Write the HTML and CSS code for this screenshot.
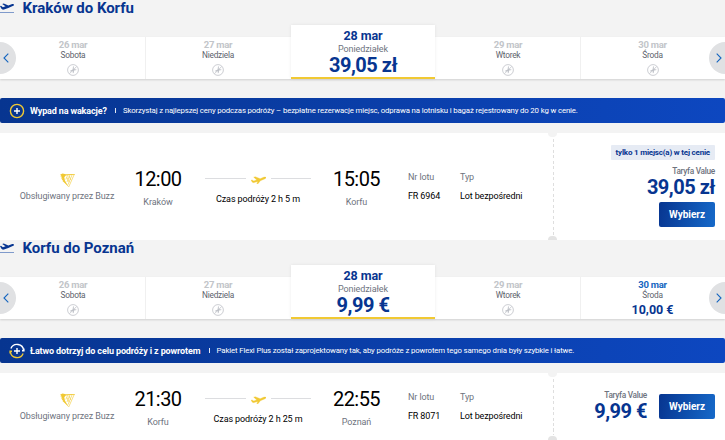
FILE: index.html
```html
<!DOCTYPE html>
<html lang="pl">
<head>
<meta charset="utf-8">
<title>Wybór lotów</title>
<link rel="stylesheet" href="styles.css">
</head>
<body>
<svg class="defs" aria-hidden="true">
  <symbol id="takeoff" viewBox="0 0 14 12"><path d="M0 4.300l1-.5 1.900 1.400 2.600-.9L2.200 2l1.600-.5L8.300 3.400l3.300-1.200c.9-.4 2.200-.3 2.400.4s-.6 1.200-1.300 1.500L8.300 6 4 7.600c-1.300.4-2.200-.1-2.700-1z"/><path class="ground" d="M0 10h14v1H0z"/></symbol>
  <symbol id="plane" viewBox="0 0 15 8"><path d="M0 4.300l1-.4 1.800 1 3-1L2.700 1.200 4.200.7l5 2 3.300-1.400c1-.4 2.300-.4 2.500.2s-.7 1.200-1.500 1.500L9.400 4.700 7.200 7.600l-1.400.3.900-2.500-3.500 1.200c-1 .3-1.600 0-2-.6z" stroke="#f1c933" stroke-width=".3"/></symbol>
  <symbol id="noflight" viewBox="0 0 12 12"><g fill="none" stroke="#bfc2c8" stroke-width=".8"><circle cx="6" cy="6" r="5.400"/><path d="M2.500 9.700L9.700 2.500"/></g><path fill="#bfc2c8" d="M2.700 7L5.600 5.400 6 2.600l.8-.4v2.800l2.400.4.500.700-2.600.4-.4 2.300-.8.700-.3-2.500-2.200.6z"/></symbol>
  <symbol id="harp" viewBox="0 0 15 15"><path fill="#f1c933" d="M0 1.800L2.500.5 6 1.300 15 .9l-.4.9-8.800.8-1.500 1.700.6 3.100 4 6.800-5-5L2.200 7.800l1.100.1L1 5.300l1.500.3L.3 3.300l1.800.3z"/><path fill="none" stroke="#f1c933" stroke-width=".6" d="M14.200 1.500L8.700 14M12 2L7.900 11.800M9.800 2.200L7 9M7.600 2.400L5.800 6.500M6.800 4.300l2.500 5M9 3l1.800 4"/></symbol>
</svg>

<section class="journey">
  <h2 class="title"><svg><use href="#takeoff"/></svg>Kraków do Korfu</h2>
  <div class="days">
    <div class="day off"><b>26 mar</b><span>Sobota</span><svg><use href="#noflight"/></svg></div>
    <div class="day off"><b>27 mar</b><span>Niedziela</span><svg><use href="#noflight"/></svg></div>
    <div class="day selected"><b>28 mar</b><span>Poniedziałek</span><strong>39,05 zł</strong></div>
    <div class="day off"><b>29 mar</b><span>Wtorek</span><svg><use href="#noflight"/></svg></div>
    <div class="day off"><b>30 mar</b><span>Środa</span><svg><use href="#noflight"/></svg></div>
    <button class="arrow prev" aria-label="Wstecz"><svg viewBox="0 0 6 10"><path d="M5.300.7L1 5l4.300 4.300"/></svg></button>
    <button class="arrow next" aria-label="Dalej"><svg viewBox="0 0 6 10"><path d="M.7.7L5 5 .7 9.300"/></svg></button>
  </div>
  <div class="banner">
    <svg viewBox="0 0 16 16"><circle cx="8" cy="8" r="6.600" stroke="#f1c933"/><path d="M8 5v6M5 8h6" stroke="#fff"/></svg>
    <b class="lead-a">Wypad na wakacje?</b><i></i><span>Skorzystaj z najlepszej ceny podczas podróży – bezpłatne rezerwacje miejsc, odprawa na lotnisku i bagaż rejestrowany do 20 kg w cenie.</span>
  </div>
  <article class="card tall">
    <div class="flight">
      <div class="carrier"><svg><use href="#harp"/></svg><span>Obsługiwany przez Buzz</span></div>
      <div class="stop"><time>12:00</time><span>Kraków</span></div>
      <div class="duration"><div class="track"><svg><use href="#plane"/></svg></div><span>Czas podróży 2 h 5 m</span></div>
      <div class="stop"><time>15:05</time><span>Korfu</span></div>
      <div class="info number"><span>Nr lotu</span><em>FR 6964</em></div>
      <div class="info"><span>Typ</span><em>Lot bezpośredni</em></div>
    </div>
    <div class="fare">
      <div class="badge">tylko 1 miejsc(a) w tej cenie</div>
      <div class="price"><span>Taryfa Value</span><strong>39,05 zł</strong></div>
      <button class="select">Wybierz</button>
    </div>
  </article>
</section>

<section class="journey">
  <h2 class="title"><svg><use href="#takeoff"/></svg>Korfu do Poznań</h2>
  <div class="days">
    <div class="day off"><b>26 mar</b><span>Sobota</span><svg><use href="#noflight"/></svg></div>
    <div class="day off"><b>27 mar</b><span>Niedziela</span><svg><use href="#noflight"/></svg></div>
    <div class="day selected"><b>28 mar</b><span>Poniedziałek</span><strong>9,99 €</strong></div>
    <div class="day off"><b>29 mar</b><span>Wtorek</span><svg><use href="#noflight"/></svg></div>
    <div class="day"><b>30 mar</b><span>Środa</span><strong>10,00 €</strong></div>
    <button class="arrow prev" aria-label="Wstecz"><svg viewBox="0 0 6 10"><path d="M5.300.7L1 5l4.300 4.300"/></svg></button>
    <button class="arrow next" aria-label="Dalej"><svg viewBox="0 0 6 10"><path d="M.7.7L5 5 .7 9.300"/></svg></button>
  </div>
  <div class="banner">
    <svg viewBox="0 0 16 16"><path d="M1.900 5.500A6.600 6.600 0 0 1 14.600 7.500M14.900 5.500v2.200H13" stroke="#fff"/><path d="M14.100 10.500A6.600 6.600 0 0 1 1.400 8.500M1.100 10.500V8.300H3" stroke="#f1c933"/><path d="M8 5v6M5 8h6" stroke="#fff"/></svg>
    <b>Łatwo dotrzyj do celu podróży i z powrotem</b><i></i><span>Pakiet Flexi Plus został zaprojektowany tak, aby podróże z powrotem tego samego dnia były szybkie i łatwe.</span>
  </div>
  <article class="card short">
    <div class="flight">
      <div class="carrier"><svg><use href="#harp"/></svg><span>Obsługiwany przez Buzz</span></div>
      <div class="stop"><time>21:30</time><span>Korfu</span></div>
      <div class="duration"><div class="track"><svg><use href="#plane"/></svg></div><span>Czas podróży 2 h 25 m</span></div>
      <div class="stop"><time>22:55</time><span>Poznań</span></div>
      <div class="info number"><span>Nr lotu</span><em>FR 8071</em></div>
      <div class="info"><span>Typ</span><em>Lot bezpośredni</em></div>
    </div>
    <div class="fare inline">
      <div class="price"><span>Taryfa Value</span><strong>9,99 €</strong></div>
      <button class="select">Wybierz</button>
    </div>
  </article>
</section>
</body>
</html>
```
FILE: styles.css
```css
* { box-sizing: border-box; }
body {
  margin: 0;
  height: 440px;
  overflow: hidden;
  background: #f3f3f3;
  font-family: Roboto, "Liberation Sans", sans-serif;
  color: #6e737e;
  white-space: nowrap;
}
.defs { display: none; }
svg { display: block; flex: none; }
button { border: 0; padding: 0; font-family: inherit; }

.title {
  display: flex;
  align-items: center;
  gap: 8.500px;
  height: 16px;
  margin: 0 0 21px;
  font-size: 15px;
  line-height: 16px;
  font-weight: 700;
  letter-spacing: -.03px;
  color: #073590;
}
.title svg { width: 14px; height: 12px; fill: #073590; }
.ground { fill: #7f9acb; }

.days {
  position: relative;
  display: grid;
  grid-template-columns: 146px 145px 144px 146px 144px;
  height: 42px;
  margin-bottom: 19px;
  background: #fff;
  box-shadow: 0 1px 2px rgba(0, 0, 0, .15);
}
.day {
  display: flex;
  flex-direction: column;
  align-items: center;
  padding-top: 2px;
  padding-left: 1px;
  border-right: 1px solid #f0f0f0;
}
.day:nth-child(2), .day:nth-child(5) { border-right: 0; padding: 2px 1px 0 0; }
.day b { font-size: 9.500px; line-height: 12px; letter-spacing: -.25px; color: #1465c0; }
.day span { font-size: 8.300px; line-height: 8px; letter-spacing: -.25px; color: #5d626c; }
.day svg { width: 12px; height: 12px; margin-top: 5px; }
.day strong { font-size: 12.500px; line-height: 14px; margin-top: 4px; color: #073590; }
.day.off b { color: #c2c5c9; }
.day.selected {
  height: 54px;
  margin-top: -12px;
  padding: 4px 0 0;
  background: #fff;
  border: 0;
  border-bottom: 2px solid #f1c933;
  box-shadow: 0 0 3px rgba(0, 0, 0, .08);
}
.day.selected b { font-size: 12.500px; line-height: 14px; letter-spacing: -.1px; color: #073590; }
.day.selected span { font-size: 9px; line-height: 12px; letter-spacing: -.1px; color: #6e737e; }
.day.selected strong { font-size: 20px; line-height: 20px; margin-top: 0; letter-spacing: -.5px; }

.arrow {
  position: absolute;
  top: 5px;
  width: 16px;
  height: 32px;
  display: flex;
  align-items: center;
  background: #e0e1e3;
}
.arrow svg { width: 6px; height: 10px; fill: none; stroke: #1465c0; stroke-width: 1.100; }
.prev { left: 0; border-radius: 0 16px 16px 0; padding-left: 3px; }
.next { right: 0; border-radius: 16px 0 0 16px; padding-left: 7px; }

.banner {
  display: flex;
  align-items: center;
  height: 25px;
  margin-bottom: 10px;
  padding-left: 9px;
  border-radius: 2px;
  background: linear-gradient(90deg, #073590, #0d47c0);
  color: #fff;
}
.banner svg { width: 16px; height: 16px; fill: none; stroke-width: 1.400; }
.banner b { margin-left: 5px; font-size: 9px; letter-spacing: -.12px; }
.banner .lead-a { letter-spacing: -.14px; }
.banner i { width: 1px; height: 5px; margin: 0 7px 0 8.200px; background: #e6ebf4; }
.banner span { font-size: 7.800px; letter-spacing: -.138px; }

.card {
  position: relative;
  display: grid;
  grid-template-columns: 554px 171px;
  background: #fff;
}
.tall { height: 107px; }
.short { height: 67px; }
.card::before, .card::after {
  content: "";
  position: absolute;
  left: 548px;
  width: 9px;
  height: 4px;
  background: #f3f3f3;
}
.card::before { top: 0; border-radius: 0 0 5px 5px; }
.card::after { bottom: 0; border-radius: 5px 5px 0 0; background: #e4e4e4; }

.flight {
  display: grid;
  grid-template-columns: 134px 48px 152px 45px 81px 94px;
  align-items: center;
  background: repeating-linear-gradient(180deg, #dedede 0 3px, transparent 3px 5.500px) 100% 6px / 1px calc(100% - 11px) no-repeat;
}
.flight > div { height: 50px; display: flex; flex-direction: column; align-items: center; }
.carrier svg { width: 15px; height: 15px; margin-top: 11px; }
.carrier span { font-size: 9px; line-height: 12px; margin-top: 2px; letter-spacing: -.12px; }
.stop time { font-size: 20px; line-height: 22px; margin-top: 6px; color: #000; letter-spacing: -.55px; }
.stop span { font-size: 9px; line-height: 12px; margin-top: 6px; letter-spacing: -.1px; }
.track { display: flex; align-items: center; gap: 5px; width: 106px; height: 10px; margin-top: 12px; }
.track::before, .track::after { content: ""; flex: 1; height: 1px; background: #dcdde0; }
.track svg { width: 15px; height: 8px; fill: #f1c933; margin-top: 3px; }
.duration span { font-size: 9px; line-height: 12px; margin-top: 9px; color: #000; letter-spacing: -.1px; }
.flight > .info { align-items: flex-start; padding-top: 9px; }
.flight > .number { padding-left: 29px; }
.info span { font-size: 9px; line-height: 12px; letter-spacing: -.1px; }
.info em { font-size: 9px; line-height: 12px; margin-top: 7px; font-style: normal; color: #000; letter-spacing: -.13px; }

.fare {
  display: flex;
  flex-direction: column;
  align-items: flex-end;
  padding: 12px 10px 0 0;
}
.badge {
  height: 15px;
  padding: 0 5px;
  border-radius: 1px;
  background: #e6ebf4;
  color: #073590;
  font-size: 8px;
  line-height: 15px;
  font-weight: 700;
  letter-spacing: -.2px;
}
.price { display: flex; flex-direction: column; align-items: flex-end; margin-top: 6px; }
.price span { font-size: 8.300px; line-height: 11px; font-weight: 500; letter-spacing: -.3px; }
.price strong { font-size: 20px; line-height: 20px; letter-spacing: -.5px; color: #073590; }
.select {
  width: 56px;
  height: 25px;
  margin-top: 5px;
  border-radius: 2px;
  background: linear-gradient(100deg, #073590, #1669c9);
  color: #fff;
  font-size: 10px;
  font-weight: 700;
}
.fare.inline { flex-direction: row; justify-content: flex-end; align-items: flex-start; gap: 12px; padding-top: 17px; }
.inline .price { margin-top: 0; }
.inline .select { margin-top: 4px; }
```
